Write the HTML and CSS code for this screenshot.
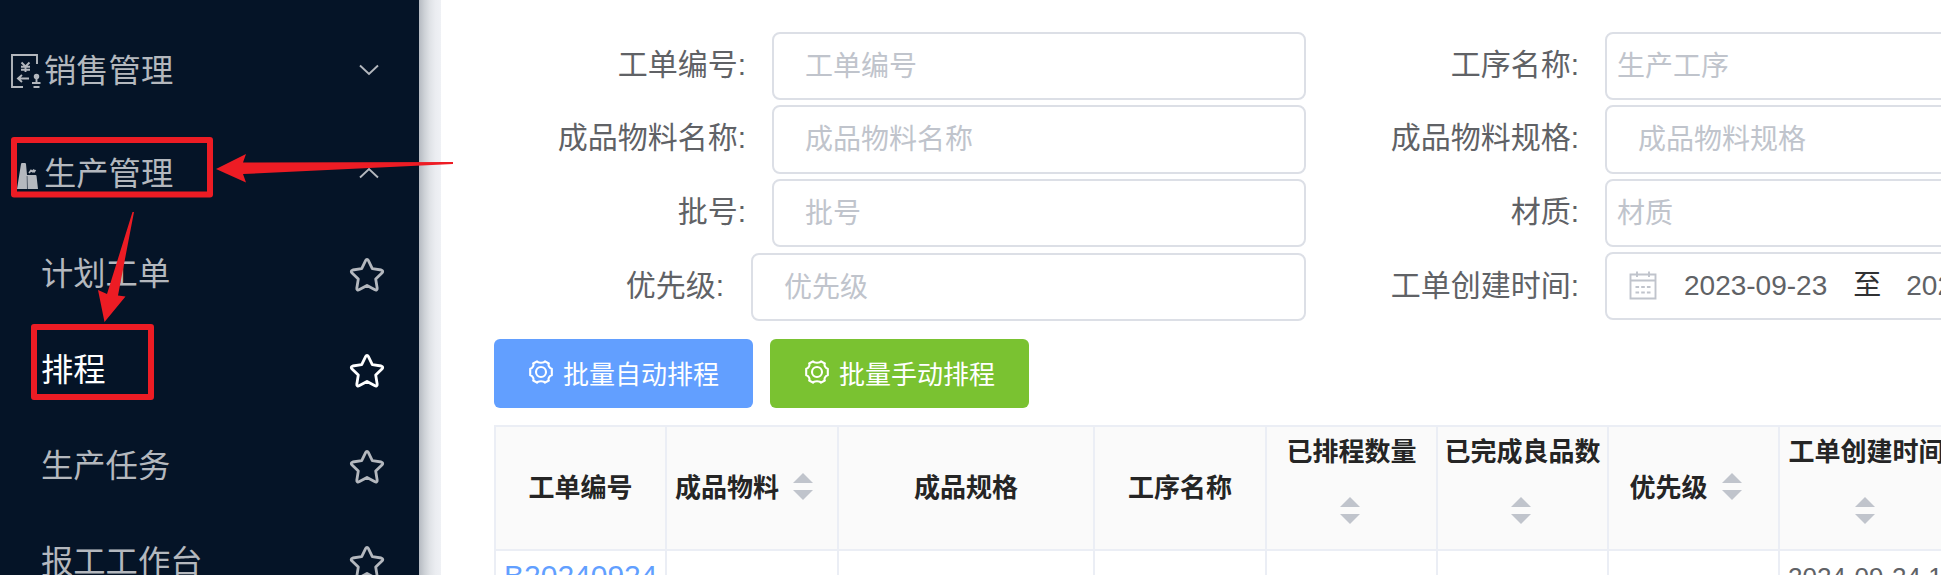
FILE: index.html
```html
<!DOCTYPE html>
<html lang="zh-CN">
<head>
<meta charset="utf-8">
<title>排程</title>
<link rel="stylesheet" href="styles.css">
</head>
<body>
<svg class="defs" width="0" height="0">
  <symbol id="star" viewBox="0 0 36 36"><path d="M18 2.500c.6 0 1 .3 1.300.9l4 8.300 9 1.300c1.500.3 1.900 1.800.9 2.800l-6.500 6.300 1.500 9.100c.2 1.400-1 2.200-2.200 1.600L18 28.500l-8 4.300c-1.200.6-2.400-.2-2.200-1.600l1.500-9.100-6.500-6.300c-1-1-.6-2.500.9-2.800l9-1.300 4-8.300c.3-.6.7-.9 1.300-.9z" fill="none" stroke="currentColor" stroke-width="2.800" stroke-linejoin="round"/></symbol>
  <symbol id="gear" viewBox="0 0 24 24"><g fill="none" stroke="currentColor" stroke-width="2.100" stroke-linejoin="round"><path d="M8 1.300C9 3.200 15 3.200 16 1.300l3.800 2.200c-1 2 .9 5 3 5.300v6.400c-2.100.3-4 3.300-3 5.300L16 22.700c-1-1.900-7-1.900-8 0l-3.800-2.200c1-2-.9-5-3-5.300V8.800c2.100-.3 4-3.300 3-5.300z"/><circle cx="12" cy="12" r="5"/></g></symbol>
</svg>
<div class="page">
  <nav class="sidebar">
    <div class="group">
      <svg class="group-icon" width="32" height="36" viewBox="0 0 32 36" fill="none" stroke="currentColor" stroke-width="1.900"><path d="M27 11V2H2v32h11"/><path d="M11.500 9.500l4 4 4-4M15.500 13.500V19M11 13.700h9M11 16.700h9"/><path d="M19 25.500H9M12 22l-4 3.500 4 3.500"/><circle cx="26.500" cy="23.500" r="1.800" fill="currentColor"/><path d="M26.500 24v6M22 30h8.500M23.500 34h6"/></svg>
      <span class="group-name">销售管理</span>
      <svg class="chevron" width="20" height="12" viewBox="0 0 20 12"><path d="M1 1.500l9 8.500 9-8.500"/></svg>
    </div>
    <div class="group">
      <svg class="group-icon" width="32" height="36" viewBox="0 0 32 36"><path fill="currentColor" d="M7 33l4-25q.2-1 1-1h3q.8 0 1 1l1 11h8.500q.8 0 1 .8L28 33H17.600l-.3-13h-.5l.2 13z"/><path d="M19 17l2-2.500 1.500 1 1.500-2M23.500 16.500l2-2.500" fill="none" stroke="currentColor" stroke-width="1.700"/></svg>
      <span class="group-name">生产管理</span>
      <svg class="chevron" width="20" height="12" viewBox="0 0 20 12"><path d="M1 10.500l9-8.500 9 8.500"/></svg>
    </div>
    <div class="item"><span>计划工单</span><svg class="star"><use href="#star"/></svg></div>
    <div class="item active"><span>排程</span><svg class="star"><use href="#star"/></svg></div>
    <div class="item"><span>生产任务</span><svg class="star"><use href="#star"/></svg></div>
    <div class="item"><span>报工工作台</span><svg class="star"><use href="#star"/></svg></div>
  </nav>
  <div class="edge"></div>
  <main class="content">
    <form class="filters">
      <div class="field"><label>工单编号:</label><div class="input wide">工单编号</div></div>
      <div class="field"><label>工序名称:</label><div class="input">生产工序</div></div>
      <div class="field"><label>成品物料名称:</label><div class="input wide tall">成品物料名称</div></div>
      <div class="field"><label>成品物料规格:</label><div class="input wide tall">成品物料规格</div></div>
      <div class="field"><label>批号:</label><div class="input wide">批号</div></div>
      <div class="field"><label>材质:</label><div class="input">材质</div></div>
      <div class="field priority"><label>优先级:</label><div class="input wide">优先级</div></div>
      <div class="field range"><label>工单创建时间:</label><div class="input dates">
        <svg class="calendar" width="28" height="29" viewBox="0 0 28 29" fill="none" stroke="currentColor" stroke-width="1.900"><path d="M1.500 3.500h25v24h-25zM1.500 9.500h25M8 .5V6M20 .5V6"/><path d="M6.500 16h15M6.500 21.500h15" stroke-dasharray="3.600 2.100"/></svg>
        <span class="date">2023-09-23</span><span class="to">至</span><span class="date">2024-09-24</span></div></div>
    </form>
    <div class="actions">
      <div class="button blue"><svg class="gear"><use href="#gear"/></svg><span>批量自动排程</span></div>
      <div class="button green"><svg class="gear"><use href="#gear"/></svg><span>批量手动排程</span></div>
    </div>
    <div class="table">
      <div class="th">工单编号</div>
      <div class="th inline">成品物料<i class="sort"></i></div>
      <div class="th">成品规格</div>
      <div class="th">工序名称</div>
      <div class="th stacked">已排程数量<i class="sort"></i></div>
      <div class="th stacked">已完成良品数<i class="sort"></i></div>
      <div class="th inline">优先级<i class="sort"></i></div>
      <div class="th stacked">工单创建时间<i class="sort"></i></div>
      <div class="td link">B20240924</div>
      <div class="td"></div><div class="td"></div><div class="td"></div><div class="td"></div><div class="td"></div><div class="td"></div>
      <div class="td">2024-09-24 1</div>
    </div>
  </main>
  <svg class="marks" width="460" height="410" viewBox="0 0 460 410">
    <g fill="none" stroke="#ed1c24" stroke-width="6" stroke-linejoin="round"><path d="M14 140h196v54.500H14zM34 327h117v70H34z"/></g>
    <path fill="#ed1c24" d="M216 169l30-15-3 8.500 210-.5v2l-210 10 3 8.500zM104.500 322L98 290l9 4 25.500-82h1.500l-16 83.500 7.500 1z"/>
  </svg>
</div>
</body>
</html>
```
FILE: styles.css
```css
* { box-sizing: border-box; }
body { margin: 0; background: #fff; font-family: "Liberation Sans", "Noto Sans CJK SC", sans-serif; }
.defs { position: absolute; }
.page { position: relative; display: flex; width: 1941px; height: 575px; overflow: hidden; }

.sidebar { flex: none; width: 419px; height: 575px; overflow: hidden; padding-top: 19px; background: #051427; color: #b4b8be; font-size: 32.300px; }
.group { display: flex; align-items: center; height: 103px; padding: 0 40px 0 10px; }
.group-icon { flex: none; margin-right: 2px; }
.group-name { flex: 1; padding-top: 1px; line-height: 48px; }
.chevron { fill: none; stroke: currentColor; stroke-width: 1.900; margin-top: -2px; }
.item { display: flex; align-items: center; justify-content: space-between; height: 96px; padding: 0 34px 0 41px; }
.item span { padding-top: 2px; line-height: 48px; }
.item.active { color: #fff; }
.star { width: 36px; height: 36px; margin-top: 4px; }

.edge { flex: none; width: 22px; background: linear-gradient(90deg, #b5bac1 0, #cdd1d6 25%, #e0e3e7 50%, #ebedf1 75%, #eff1f5 100%); }

.content { flex: none; width: 1700px; padding: 32px 0 0 53px; }
.filters { display: grid; grid-template-columns: 812px 834px; grid-template-rows: 73px 74px 74px 68px; }
.field { display: flex; align-items: flex-start; }
.field label { width: 278px; padding-right: 26px; text-align: right; font-size: 30px; line-height: 66px; color: #606266; white-space: nowrap; }
.field:nth-child(even) label { width: 299px; }
.input { flex: 1; height: 68px; padding-left: 10px; border: 2px solid #dcdfe6; border-radius: 8px; font-size: 28px; line-height: 66px; color: #c0c4cc; white-space: nowrap; }
.input.tall { height: 69px; }
.input.wide { padding-left: 31px; }
.field.priority label { width: 257px; padding-right: 27px; }
.range .input { margin-top: -1px; }
.input.dates { display: flex; align-items: center; padding-left: 22px; line-height: 64px; }
.calendar { margin: -2px 27px 0 0; }
.date { color: #606266; }
.to { margin: 0 25px 0 26px; color: #303133; }

.actions { display: flex; gap: 17px; margin-top: 18px; }
.button { display: flex; align-items: center; width: 259px; height: 69px; padding-left: 35px; border-radius: 6px; color: #fff; font-size: 26px; }
.button span { padding-bottom: 3px; }
.blue { background: #629fff; }
.green { background: #7ac231; }
.gear { width: 24px; height: 24px; margin: -3px 10px 0 0; }

.table { display: grid; grid-template-columns: 171px 172px 256px 172px 171px 171px 171px 175px; grid-template-rows: 124px 60px; width: 1461px; margin-top: 17px; border: 2px solid #ebeef5; border-bottom: 0; }
.th { display: flex; align-items: center; justify-content: center; border-right: 2px solid #ebeef5; border-bottom: 2px solid #ebeef5; background: #fafafa; color: #252525; font-size: 26px; font-weight: bold; line-height: 40px; white-space: nowrap; }
.th.inline { padding: 0 16px 1px 0; }
.stacked { flex-direction: column; justify-content: flex-start; padding-top: 5px; }
.sort { display: flex; flex-direction: column; gap: 7px; }
.sort::before, .sort::after { content: ""; border: 10px solid transparent; }
.sort::before { border-top: 0; border-bottom-color: #c0c4cc; }
.sort::after { border-bottom: 0; border-top-color: #c0c4cc; }
.inline .sort { margin: -2px 0 0 14px; }
.stacked .sort { margin: 25px 4px 0 0; }
.td { padding: 8px 0 0 8px; border-right: 2px solid #ebeef5; color: #606266; font-size: 26px; line-height: 36px; white-space: nowrap; }
.td.link { padding: 7px 0 0 8px; color: #629fff; font-size: 30px; }

.marks { position: absolute; left: 0; top: 0; }
```
